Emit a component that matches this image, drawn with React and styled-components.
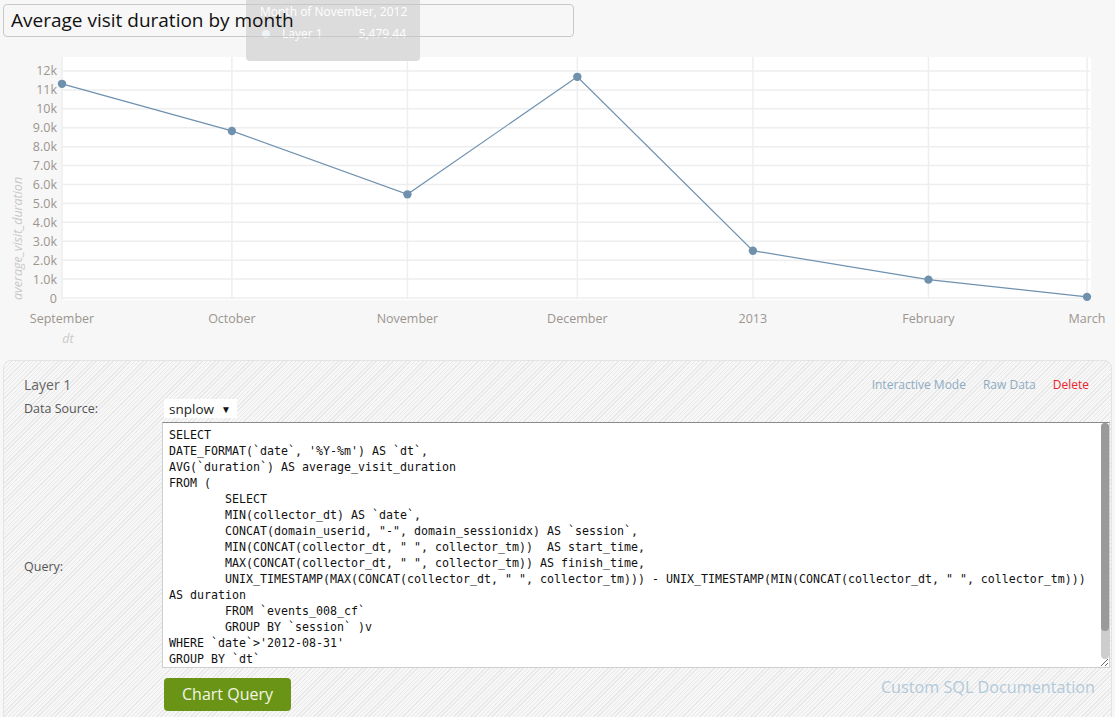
import React from "react";
import styled, { createGlobalStyle } from "styled-components";

const GlobalStyle = createGlobalStyle`
  html, body {
    margin: 0;
    padding: 0;
    background: #f7f7f7;
    font-family: "Open Sans", "DejaVu Sans", sans-serif;
  }
`;

// chart data, x taken from days since Sep 1 2012
const points = [
  { label: "September", day: 0, value: 11320 },
  { label: "October", day: 30, value: 8830 },
  { label: "November", day: 61, value: 5479.44 },
  { label: "December", day: 91, value: 11690 },
  { label: "2013", day: 122, value: 2500 },
  { label: "February", day: 153, value: 970 },
  { label: "March", day: 181, value: 60 },
];

const PLOT_LEFT = 62;
const PLOT_RIGHT = 1087;
const PLOT_TOP = 57;
const PLOT_BOTTOM = 298;
const PX_PER_K = 18.92;

const xOf = (day) => PLOT_LEFT + (day / 181) * (PLOT_RIGHT - PLOT_LEFT);
const yOf = (value) => PLOT_BOTTOM - (value / 1000) * PX_PER_K;
const tickLabel = (k) => (k === 0 ? "0" : k >= 10 ? `${k}k` : `${k}.0k`);

const sql = `SELECT
DATE_FORMAT(\`date\`, '%Y-%m') AS \`dt\`,
AVG(\`duration\`) AS average_visit_duration
FROM (
\tSELECT
\tMIN(collector_dt) AS \`date\`,
\tCONCAT(domain_userid, "-", domain_sessionidx) AS \`session\`,
\tMIN(CONCAT(collector_dt, " ", collector_tm))  AS start_time,
\tMAX(CONCAT(collector_dt, " ", collector_tm)) AS finish_time,
\tUNIX_TIMESTAMP(MAX(CONCAT(collector_dt, " ", collector_tm))) - UNIX_TIMESTAMP(MIN(CONCAT(collector_dt, " ", collector_tm))) AS duration
\tFROM \`events_008_cf\`
\tGROUP BY \`session\` )v
WHERE \`date\`>'2012-08-31'
GROUP BY \`dt\`

`;

// share of the query that fits in the box, for the scroll thumb
const visibleShare = 0.88;

const Chart = () => {
  const ticks = Array.from({ length: 13 }, (_, i) => i);
  const line = points.map((p) => `${xOf(p.day)},${yOf(p.value)}`).join(" ");

  return (
    <ChartSvg viewBox="0 40 1115 312" width="1115" height="312">
      <rect x={PLOT_LEFT} y={PLOT_TOP} width={1029} height={243} rx="3" fill="#fff" />
      {ticks.map((k) => (
        <line
          key={k}
          x1={PLOT_LEFT}
          x2={1090}
          y1={yOf(k * 1000)}
          y2={yOf(k * 1000)}
          stroke="#eeeeee"
          strokeWidth="1.5"
        />
      ))}
      {points.map((p) => (
        <line
          key={p.label}
          x1={xOf(p.day)}
          x2={xOf(p.day)}
          y1={PLOT_TOP}
          y2={PLOT_BOTTOM + 1}
          stroke="#eeeeee"
          strokeWidth="1.5"
        />
      ))}
      {ticks.map((k) => (
        <AxisText key={k} x="57" y={yOf(k * 1000)} textAnchor="end" dominantBaseline="central">
          {tickLabel(k)}
        </AxisText>
      ))}
      {points.map((p) => (
        <AxisText key={p.label} x={xOf(p.day)} y="318" textAnchor="middle" dominantBaseline="central">
          {p.label}
        </AxisText>
      ))}
      <AxisTitle x="22" y="300" transform="rotate(-90 22 300)">
        average_visit_duration
      </AxisTitle>
      <AxisTitle x="68" y="338" textAnchor="middle" dominantBaseline="central">
        dt
      </AxisTitle>
      <polyline points={line} fill="none" stroke="#6f91ae" strokeWidth="1.2" />
      {points.map((p) => (
        <circle key={p.label} cx={xOf(p.day)} cy={yOf(p.value)} r="4.2" fill="#6f91ae" />
      ))}
    </ChartSvg>
  );
};

const App = () => {
  return (
    <Page>
      <GlobalStyle />
      <TitleRow>
        <Tooltip>
          <TipTitle>Month of November, 2012</TipTitle>
          <TipRow>
            <TipDot />
            <TipName>Layer 1</TipName>
            <TipValue>5,479.44</TipValue>
          </TipRow>
        </Tooltip>
        <TitleInput defaultValue="Average visit duration by month" />
      </TitleRow>

      <Chart />

      <LayerPanel>
        <PanelHeader>
          <LayerName>Layer 1</LayerName>
          <Links>
            <PanelLink>Interactive Mode</PanelLink>
            <PanelLink>Raw Data</PanelLink>
            <PanelLink danger>Delete</PanelLink>
          </Links>
        </PanelHeader>

        <FormGrid>
          <Label>Data Source:</Label>
          <SourceSelect>
            snplow <Caret>▼</Caret>
          </SourceSelect>

          <QueryLabel>Query:</QueryLabel>
          <QueryWrap>
            <QueryBox defaultValue={sql} spellCheck={false} />
            <ScrollTrack>
              <ScrollThumb style={{ height: `${visibleShare * 100}%` }} />
            </ScrollTrack>
          </QueryWrap>

          <Actions>
            <ChartButton>Chart Query</ChartButton>
            <DocLink>Custom SQL Documentation</DocLink>
          </Actions>
        </FormGrid>
      </LayerPanel>
    </Page>
  );
};

export default App;

const Page = styled.div`
  width: 1115px;
  padding-top: 4px;
`;

// title and hover tooltip
const TitleRow = styled.div`
  position: relative;
  height: 36px;
  padding-left: 3px;
`;

const TitleInput = styled.input`
  position: relative;
  z-index: 2;
  box-sizing: border-box;
  width: 571px;
  height: 33px;
  padding: 0 7px 1px 7px;
  border: 1px solid #c8c8c8;
  border-radius: 4px;
  background: transparent;
  font-family: "Open Sans", sans-serif;
  font-size: 19px;
  color: #111;
  outline: none;
`;

const Tooltip = styled.div`
  position: absolute;
  z-index: 1;
  left: 246px;
  top: -4px;
  box-sizing: border-box;
  width: 174px;
  height: 61px;
  padding: 1px 14px 0 14px;
  background: #dcdcdc;
  border-radius: 0 0 4px 4px;
  color: #fff;
  font-size: 12px;
  white-space: nowrap;
`;

const TipTitle = styled.div`
  line-height: 22px;
`;

const TipRow = styled.div`
  display: flex;
  align-items: center;
  line-height: 21px;
`;

const TipDot = styled.span`
  width: 8px;
  height: 8px;
  margin-left: 2px;
  border-radius: 50%;
  background: #eef3f8;
`;

const TipName = styled.span`
  margin-left: 12px;
  flex: 1;
`;

const TipValue = styled.span``;

const ChartSvg = styled.svg`
  display: block;
  font-family: "Open Sans", sans-serif;
`;

const AxisText = styled.text`
  font-size: 12.5px;
  fill: #9b958f;
`;

const AxisTitle = styled.text`
  font-size: 12.5px;
  font-style: italic;
  fill: #c9c9c9;
`;

// layer panel
const LayerPanel = styled.div`
  box-sizing: border-box;
  width: 1109px;
  margin: 8px 0 0 3px;
  padding: 13px 1px 12px 20px;
  border: 1px solid #e4e4e4;
  border-radius: 8px;
  background-color: #f6f6f6;
  background-image: repeating-linear-gradient(
    135deg,
    #f7f7f7 0,
    #f7f7f7 2px,
    #e8e8e8 2px,
    #e8e8e8 3px
  );
`;

const PanelHeader = styled.div`
  display: flex;
  justify-content: space-between;
  align-items: center;
  height: 20px;
  padding-right: 21px;
`;

const LayerName = styled.div`
  font-size: 14px;
  color: #666;
`;

const Links = styled.div`
  display: flex;
  gap: 17px;
`;

const PanelLink = styled.a`
  font-size: 12px;
  color: ${(p) => (p.danger ? "#e8262c" : "#8eabc2")};
  cursor: pointer;
`;

const FormGrid = styled.div`
  display: grid;
  grid-template-columns: 138px 948px;
  margin-top: 5px;
  row-gap: 4px;
`;

const Label = styled.div`
  align-self: center;
  font-size: 12.5px;
  color: #555;
`;

const QueryLabel = styled(Label)`
  grid-row: span 2;
`;

const SourceSelect = styled.button`
  justify-self: start;
  display: flex;
  align-items: center;
  height: 19px;
  margin-left: 2px;
  padding: 0 6px 0 5px;
  border: none;
  background: #fff;
  font-family: "Open Sans", sans-serif;
  font-size: 13.5px;
  color: #222;
`;

const Caret = styled.span`
  margin-left: 7px;
  font-size: 10px;
  color: #111;
`;

const QueryWrap = styled.div`
  position: relative;
  width: 948px;
  height: 246px;
`;

const QueryBox = styled.textarea`
  display: block;
  box-sizing: border-box;
  width: 948px;
  height: 246px;
  margin: 0;
  padding: 4px 16px 2px 6px;
  border: 1px solid #cfcfcf;
  border-top-color: #8a8a8a;
  background: #fff;
  font-family: "DejaVu Sans Mono", monospace;
  font-size: 11.63px;
  line-height: 16px;
  color: #111;
  tab-size: 8;
  white-space: pre-wrap;
  outline: none;
  resize: vertical;
`;

const ScrollTrack = styled.div`
  position: absolute;
  top: 1px;
  right: 1px;
  bottom: 9px;
  width: 8px;
  border-radius: 4px;
  background: #cdcdcd;
`;

const ScrollThumb = styled.div`
  width: 8px;
  border-radius: 4px;
  background: #9a9a9a;
`;

const Actions = styled.div`
  display: flex;
  justify-content: space-between;
  align-items: flex-start;
  margin-top: 6px;
  padding-right: 15px;
`;

const ChartButton = styled.button`
  height: 33px;
  margin-left: 2px;
  padding: 0 18px 0 18px;
  border: none;
  border-radius: 4px;
  background: #6a9416;
  color: #f3f6e6;
  font-family: "Open Sans", sans-serif;
  font-size: 16px;
  line-height: 33px;
`;

const DocLink = styled.a`
  margin-top: -1px;
  font-size: 16.2px;
  line-height: 20px;
  color: #b2c9da;
`;
